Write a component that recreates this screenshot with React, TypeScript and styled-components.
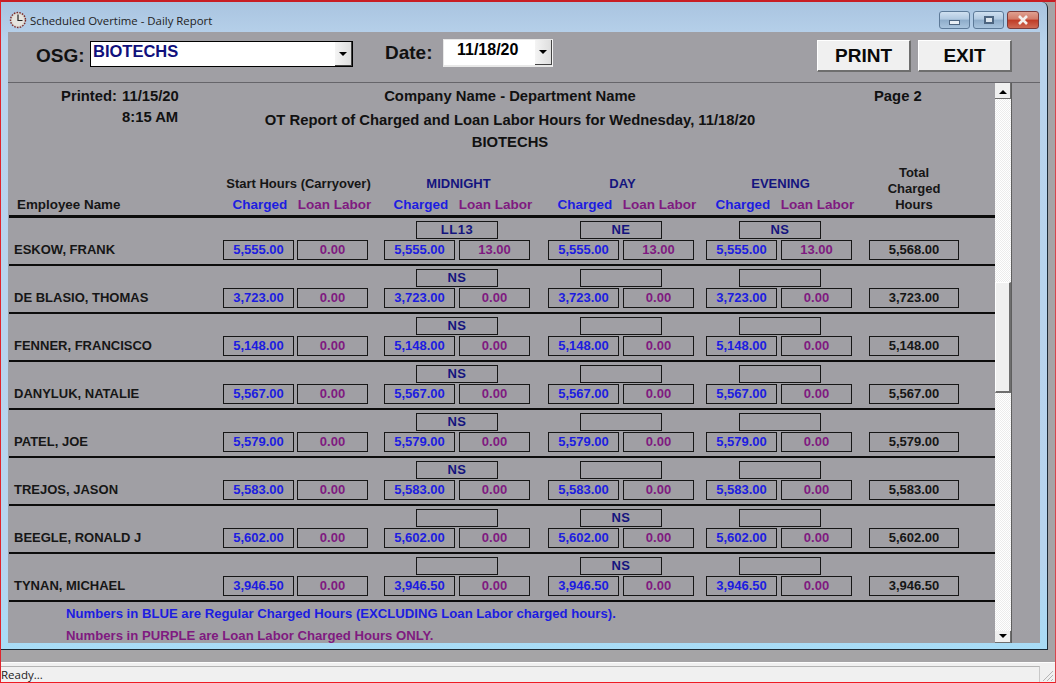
import { FC } from "react";
import styled, { createGlobalStyle } from "styled-components";

type TEmployee = {
  name: string;
  hours: string;
  total?: string;
  loan?: string;
  codes: [string, string, string];
};

const employees: TEmployee[] = [
  { name: "ESKOW, FRANK", hours: "5,555.00", total: "5,568.00", loan: "13.00", codes: ["LL13", "NE", "NS"] },
  { name: "DE BLASIO, THOMAS", hours: "3,723.00", codes: ["NS", "", ""] },
  { name: "FENNER, FRANCISCO", hours: "5,148.00", codes: ["NS", "", ""] },
  { name: "DANYLUK, NATALIE", hours: "5,567.00", codes: ["NS", "", ""] },
  { name: "PATEL, JOE", hours: "5,579.00", codes: ["NS", "", ""] },
  { name: "TREJOS, JASON", hours: "5,583.00", codes: ["NS", "", ""] },
  { name: "BEEGLE, RONALD J", hours: "5,602.00", codes: ["", "NS", ""] },
  { name: "TYNAN, MICHAEL", hours: "3,946.50", codes: ["", "NS", ""] },
];

const shifts = [
  { title: "MIDNIGHT", gap: 16, nudge: 0 },
  { title: "DAY", gap: 18, nudge: 0 },
  { title: "EVENING", gap: 12, nudge: 2 },
];

const ClockIcon: FC = () => (
  <svg width="18" height="18" viewBox="0 0 18 18">
    <circle cx="9" cy="9" r="7.5" fill="#d8d4cc" stroke="#7a2a2a" strokeWidth="1.4" strokeDasharray="1.6 1.2" />
    <circle cx="9" cy="9" r="6" fill="#e6e4df" />
    <path d="M9 3.5V9.5H13.5" fill="none" stroke="#222" strokeWidth="1.2" />
  </svg>
);

const App: FC = () => {
  return (
    <>
      <GlobalStyle />
      <Screen>
        <Window>
          <TitleBar>
            <ClockIcon />
            <TitleText>Scheduled Overtime - Daily Report</TitleText>
            <WindowButtons>
              <WindowButton>
                <MinGlyph />
              </WindowButton>
              <WindowButton>
                <MaxGlyph />
              </WindowButton>
              <CloseButton>
                <svg width="14" height="10" viewBox="0 0 14 10">
                  <path d="M3 1L11 9M11 1L3 9" stroke="#f4f0ee" strokeWidth="2.6" />
                </svg>
              </CloseButton>
            </WindowButtons>
          </TitleBar>
          <Client>
            <Toolbar>
              <OsgLabel>OSG:</OsgLabel>
              <Combo>
                <ComboText>BIOTECHS</ComboText>
                <DropButton>
                  <ArrowDown />
                </DropButton>
              </Combo>
              <DateLabel>Date:</DateLabel>
              <DateBox>
                <DateText>11/18/20</DateText>
                <DropButton>
                  <ArrowDown />
                </DropButton>
              </DateBox>
              <ActionButtons>
                <ActionButton>PRINT</ActionButton>
                <ActionButton>EXIT</ActionButton>
              </ActionButtons>
            </Toolbar>
            <Pane>
              <Report>
                <Heading>
                  <Printed>
                    <span>Printed:</span>
                    <span>11/15/20</span>
                    <span />
                    <span>8:15 AM</span>
                  </Printed>
                  <Titles>
                    <TitleLine>Company Name - Department Name</TitleLine>
                    <TitleLine>OT Report of Charged and Loan Labor Hours for Wednesday, 11/18/20</TitleLine>
                    <TitleLine>BIOTECHS</TitleLine>
                  </Titles>
                  <PageNumber>Page 2</PageNumber>
                </Heading>
                <ColumnHeads>
                  <NameHead>Employee Name</NameHead>
                  <HeadGroup>
                    <GroupTitle $inset={6}>Start Hours (Carryover)</GroupTitle>
                    <SubHeads>
                      <Charged>Charged</Charged>
                      <Loan>Loan Labor</Loan>
                    </SubHeads>
                  </HeadGroup>
                  {shifts.map((shift) => (
                    <HeadGroup key={shift.title} $gap={shift.gap} $wide>
                      <GroupTitle $shift $inset={3}>
                        {shift.title}
                      </GroupTitle>
                      <SubHeads>
                        <Charged>Charged</Charged>
                        <Loan>Loan Labor</Loan>
                      </SubHeads>
                    </HeadGroup>
                  ))}
                  <TotalHead>
                    Total
                    <br />
                    Charged
                    <br />
                    Hours
                  </TotalHead>
                </ColumnHeads>
                {employees.map((employee) => (
                  <Row key={employee.name}>
                    <EmployeeName>{employee.name}</EmployeeName>
                    <Group>
                      <Values>
                        <ValueBox $color="#1c1ce0">{employee.hours}</ValueBox>
                        <ValueBox $color="#7f1a80">0.00</ValueBox>
                      </Values>
                    </Group>
                    {shifts.map((shift, index) => (
                      <Group key={shift.title} $gap={shift.gap} $wide>
                        <CodeBox $nudge={shift.nudge}>{employee.codes[index]}</CodeBox>
                        <Values $wide>
                          <ValueBox $color="#1c1ce0">{employee.hours}</ValueBox>
                          <ValueBox $color="#7f1a80">{employee.loan ?? "0.00"}</ValueBox>
                        </Values>
                      </Group>
                    ))}
                    <TotalBox $color="#161616">{employee.total ?? employee.hours}</TotalBox>
                  </Row>
                ))}
                <Notes>
                  <Note $color="#1c1ce0">Numbers in BLUE are Regular Charged Hours (EXCLUDING Loan Labor charged hours).</Note>
                  <Note $color="#7f1a80">Numbers in PURPLE are Loan Labor Charged Hours ONLY.</Note>
                </Notes>
              </Report>
              <ScrollBar>
                <ScrollButton $height={16}>
                  <ArrowUp />
                </ScrollButton>
                <Track $height={183} />
                <Thumb />
                <Track />
                <ScrollButton $height={12}>
                  <ArrowDown />
                </ScrollButton>
              </ScrollBar>
            </Pane>
          </Client>
        </Window>
        <StatusBar>
          <StatusPane>Ready...</StatusPane>
          <Grip>
            <svg width="14" height="14" viewBox="0 0 14 14">
              <path d="M13 3L3 13M13 7L7 13M13 11L11 13" stroke="#b5b5b5" strokeWidth="1" />
            </svg>
          </Grip>
        </StatusBar>
      </Screen>
    </>
  );
};

export default App;

const GlobalStyle = createGlobalStyle`
  html, body {
    margin: 0;
    padding: 0;
    background: #a3a3a3;
  }

  * {
    box-sizing: border-box;
  }
`;

const Screen = styled.div`
  width: 1056px;
  height: 683px;
  display: flex;
  flex-direction: column;
  overflow: hidden;
  background: #a5a4a6;
  border-left: 1px solid #e0242c;
  border-right: 1px solid #d8454c;
  border-top: 2px solid #c81e24;
  border-bottom: 1px solid #ee1c24;
  font-family: "Liberation Sans", Arial, sans-serif;
`;

const Window = styled.div`
  width: 1047px;
  height: 648px;
  flex: none;
  display: flex;
  flex-direction: column;
  padding: 0 7px 6px;
  background: linear-gradient(180deg, #a9c4e0 0, #b9d3ec 40px, #b7d4ee 560px, #a8dcf6 100%);
  border-right: 1px solid #1c2a36;
  border-bottom: 1px solid #1c2a36;
  border-top-right-radius: 6px;
`;

const TitleBar = styled.div`
  height: 30px;
  flex: none;
  display: flex;
  align-items: center;
  padding: 6px 1px 0 1px;
`;

const TitleText = styled.span`
  margin-left: 3px;
  font-family: "Open Sans", "Noto Sans", sans-serif;
  font-size: 11.4px;
  color: #222;
`;

const WindowButtons = styled.div`
  margin-left: auto;
  display: flex;
  gap: 3px;
  align-self: flex-start;
  margin-top: 3px;
`;

const WindowButton = styled.div`
  width: 31px;
  height: 18px;
  display: flex;
  align-items: center;
  justify-content: center;
  border: 1px solid #5d7a98;
  border-radius: 3px;
  background: linear-gradient(180deg, #cfe0f0 0, #b0c8e0 45%, #8eacc9 50%, #a9c4dd 100%);
`;

const CloseButton = styled(WindowButton)`
  width: 32px;
  border-color: #7a3a3a;
  background: linear-gradient(180deg, #e0a090 0, #d27a68 45%, #bf3a26 50%, #cf6a55 100%);
`;

const MinGlyph = styled.div`
  width: 11px;
  height: 5px;
  margin-top: 5px;
  background: #e8eef4;
  border: 1px solid #4d6580;
`;

const MaxGlyph = styled.div`
  width: 10px;
  height: 8px;
  background: #dde6ee;
  border: 2px solid #4d6580;
`;

const Client = styled.div`
  flex: 1;
  min-height: 0;
  display: flex;
  flex-direction: column;
  overflow: hidden;
  background: #a09fa4;
`;

const Toolbar = styled.div`
  height: 51px;
  flex: none;
  display: flex;
  align-items: flex-start;
  padding-left: 28px;
  border-bottom: 1px solid #66656a;
`;

const OsgLabel = styled.div`
  width: 54px;
  margin-top: 13px;
  font-size: 19px;
  font-weight: bold;
  line-height: 21px;
  color: #111;
`;

const Combo = styled.div`
  width: 263px;
  height: 26px;
  margin-top: 9px;
  display: flex;
  justify-content: space-between;
  background: #fff;
  border: 1px solid #000;
`;

const ComboText = styled.span`
  padding-left: 2px;
  font-size: 16.5px;
  font-weight: bold;
  line-height: 18px;
  color: #10107c;
`;

const DateLabel = styled.div`
  width: 58px;
  margin: 10px 0 0 32px;
  font-size: 19px;
  font-weight: bold;
  line-height: 21px;
  color: #111;
`;

const DateBox = styled.div`
  width: 110px;
  height: 28px;
  margin-top: 7px;
  display: flex;
  justify-content: space-between;
  background: #fff;
  border: 1px solid #e8e8e8;
  border-bottom-width: 2px;
  border-right: 1px solid #f4f4f4;
`;

const DateText = styled.span`
  padding: 1px 0 0 13px;
  font-size: 16px;
  font-weight: bold;
  line-height: 18px;
  color: #000;
`;

const DropButton = styled.div`
  width: 17px;
  height: 100%;
  display: flex;
  align-items: center;
  justify-content: center;
  background: linear-gradient(90deg, #f4f4f4, #dedede);
  border-right: 1px solid #444;
  border-bottom: 1px solid #444;
`;

const ArrowDown = styled.div`
  width: 0;
  height: 0;
  border-left: 4px solid transparent;
  border-right: 4px solid transparent;
  border-top: 4px solid #000;
`;

const ArrowUp = styled.div`
  width: 0;
  height: 0;
  border-left: 4px solid transparent;
  border-right: 4px solid transparent;
  border-bottom: 4px solid #000;
`;

const ActionButtons = styled.div`
  margin: 8px 28px 0 auto;
  display: flex;
  gap: 7px;
`;

const ActionButton = styled.div`
  width: 94px;
  height: 32px;
  display: flex;
  align-items: center;
  justify-content: center;
  font-size: 19px;
  font-weight: bold;
  color: #0a0a0a;
  background: #f0f0f0;
  border-top: 1px solid #fff;
  border-left: 1px solid #fff;
  border-right: 2px solid #6e6e6e;
  border-bottom: 2px solid #6e6e6e;
`;

const Pane = styled.div`
  flex: 1;
  min-height: 0;
  display: flex;
`;

const Report = styled.div`
  width: 986px;
  margin-left: 1px;
  overflow: hidden;
  flex: none;
`;

const Heading = styled.div`
  height: 82px;
  display: grid;
  grid-template-columns: 171px 660px 1fr;
  padding-top: 3px;
  font-size: 14.8px;
  font-weight: bold;
  color: #111;
`;

const Printed = styled.div`
  display: grid;
  grid-template-columns: 108px auto;
  grid-auto-rows: 21px;
  column-gap: 5px;
  justify-content: start;
  line-height: 20px;

  & > span:nth-child(odd) {
    text-align: right;
  }
`;

const Titles = styled.div`
  display: flex;
  flex-direction: column;
  align-items: center;
`;

const TitleLine = styled.div`
  height: 22px;
  line-height: 20px;
  white-space: nowrap;

  &:first-child {
    height: 24px;
  }
`;

const PageNumber = styled.div`
  padding-left: 34px;
  line-height: 20px;
`;

const ColumnHeads = styled.div`
  height: 53px;
  display: flex;
  align-items: flex-end;
  padding-bottom: 2px;
  border-bottom: 3px solid #0c0c0c;
  font-size: 13px;
  font-weight: bold;
  line-height: 16px;
  color: #161616;
  white-space: nowrap;
`;

const NameHead = styled.div`
  width: 214px;
  padding-left: 8px;
  font-size: 13.4px;
`;

const HeadGroup = styled.div<{ $gap?: number; $wide?: boolean }>`
  width: ${({ $wide }) => ($wide ? 146 : 145)}px;
  margin-left: ${({ $gap }) => $gap ?? 0}px;
  flex: none;
  display: flex;
  flex-direction: column;
  align-items: center;
  gap: 5px;
`;

const GroupTitle = styled.div<{ $shift?: boolean; $inset: number }>`
  padding-left: ${({ $inset }) => $inset}px;
  color: ${({ $shift }) => ($shift ? "#14147e" : "#161616")};
`;

const SubHeads = styled.div`
  width: 100%;
  display: grid;
  grid-template-columns: 71px 71px;
  column-gap: 3.5px;
  padding-left: 1.5px;
  justify-items: center;
  font-size: 13.5px;
`;

const Charged = styled.span`
  color: #1c1ce0;
`;

const Loan = styled.span`
  color: #7f1a80;
`;

const TotalHead = styled.div`
  width: 90px;
  margin-left: 17px;
  flex: none;
  text-align: center;
`;

const Row = styled.div`
  height: 48px;
  display: flex;
  align-items: flex-start;
  padding-top: 3px;
  border-bottom: 2px solid #0c0c0c;
  font-size: 13px;
  font-weight: bold;
`;

const EmployeeName = styled.div`
  width: 214px;
  flex: none;
  margin-top: 19px;
  padding-left: 5px;
  line-height: 20px;
  color: #161616;
  white-space: nowrap;
`;

const Group = styled.div<{ $gap?: number; $wide?: boolean }>`
  width: ${({ $wide }) => ($wide ? 146 : 145)}px;
  margin-left: ${({ $gap }) => $gap ?? 0}px;
  flex: none;
  display: flex;
  flex-direction: column;
  align-items: center;
  justify-content: flex-end;
  height: 39px;
  gap: 1px;
`;

const CodeBox = styled.div<{ $nudge: number }>`
  width: 82px;
  height: 18px;
  flex: none;
  margin-left: ${({ $nudge }) => $nudge}px;
  text-align: center;
  line-height: 16px;
  letter-spacing: 0.5px;
  color: #14147e;
  border: 1px solid #161616;
`;

const Values = styled.div<{ $wide?: boolean }>`
  display: flex;
  gap: ${({ $wide }) => ($wide ? 4 : 3)}px;
`;

const ValueBox = styled.div<{ $color: string }>`
  width: 71px;
  height: 20px;
  flex: none;
  text-align: center;
  line-height: 18px;
  color: ${({ $color }) => $color};
  border: 1px solid #161616;
`;

const TotalBox = styled(ValueBox)`
  width: 90px;
  margin: 19px 0 0 17px;
`;

const Notes = styled.div`
  padding-top: 1px;
`;

const Note = styled.div<{ $color: string }>`
  height: 22px;
  padding-left: 57px;
  font-size: 13.15px;
  font-weight: bold;
  line-height: 22px;
  color: ${({ $color }) => $color};
  white-space: nowrap;
`;

const ScrollBar = styled.div`
  width: 17px;
  flex: none;
  display: flex;
  flex-direction: column;
  border-right: 1px solid #5e5e5e;
`;

const ScrollButton = styled.div<{ $height: number }>`
  height: ${({ $height }) => $height}px;
  flex: none;
  display: flex;
  align-items: flex-end;
  justify-content: center;
  padding-bottom: 4px;
  background: #f0f0f0;
  border-right: 1px solid #6e6e6e;
  border-bottom: 1px solid #6e6e6e;
`;

const Track = styled.div<{ $height?: number }>`
  flex: ${({ $height }) => ($height ? `none` : 1)};
  height: ${({ $height }) => ($height ? `${$height}px` : "auto")};
  background: repeating-conic-gradient(#fff 0 25%, #ececec 0 50%) 0 0 / 2px 2px;
`;

const Thumb = styled.div`
  height: 111px;
  flex: none;
  background: #f0f0f0;
  border-top: 1px solid #fff;
  border-left: 1px solid #fff;
  border-right: 2px solid #6e6e6e;
  border-bottom: 2px solid #6e6e6e;
`;

const StatusBar = styled.div`
  height: 20px;
  flex: none;
  margin-top: 12px;
  display: flex;
  background: #f0f0f0;
  border-top: 1px solid #fdfdfd;
`;

const StatusPane = styled.div`
  flex: 1;
  margin-top: 3px;
  font-family: "Open Sans", "Noto Sans", sans-serif;
  font-size: 11.5px;
  line-height: 15px;
  color: #222;
  border-top: 1px solid #b4b4b4;
  border-right: 1px solid #c8c8c8;
`;

const Grip = styled.div`
  width: 15px;
  flex: none;
  display: flex;
  align-items: flex-end;
`;
